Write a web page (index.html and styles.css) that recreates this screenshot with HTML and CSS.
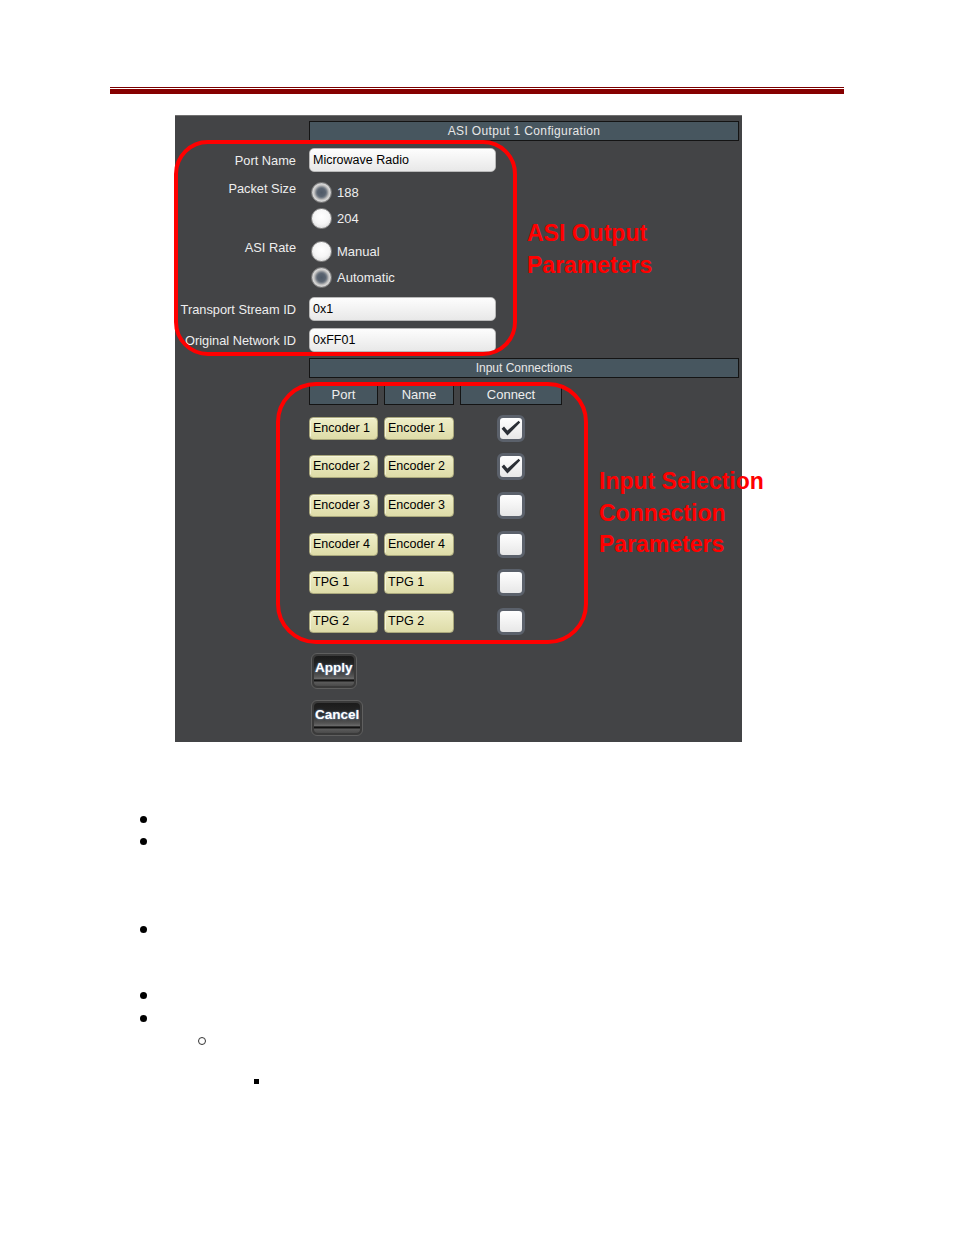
FILE: index.html
```html
<!DOCTYPE html>
<html>
<head>
<meta charset="utf-8">
<link rel="stylesheet" href="styles.css">
</head>
<body>
<div class="page">
  <div class="rule">
    <div class="rule-thin"></div>
    <div class="rule-thick"></div>
  </div>

  <div class="panel">
    <div class="sec-head sec-wide">ASI Output 1 Configuration</div>

    <div class="form">
      <div class="row center">
        <div class="lbl">Port Name</div>
        <div class="textbox">Microwave Radio</div>
      </div>
      <div class="row top">
        <div class="lbl">Packet Size</div>
        <div class="radios">
          <div class="radio-item"><span class="radio on"></span>188</div>
          <div class="radio-item"><span class="radio off"></span>204</div>
        </div>
      </div>
      <div class="row top">
        <div class="lbl">ASI Rate</div>
        <div class="radios">
          <div class="radio-item"><span class="radio off"></span>Manual</div>
          <div class="radio-item"><span class="radio on"></span>Automatic</div>
        </div>
      </div>
      <div class="row center">
        <div class="lbl">Transport Stream ID</div>
        <div class="textbox">0x1</div>
      </div>
      <div class="row center">
        <div class="lbl">Original Network ID</div>
        <div class="textbox">0xFF01</div>
      </div>
    </div>

    <div class="sec-head sec-conn">Input Connections</div>

    <div class="conn">
      <div class="conn-head">
        <div class="ch">Port</div>
        <div class="ch">Name</div>
        <div class="ch">Connect</div>
      </div>
      <div class="conn-rows">
        <div class="conn-row">
          <div class="chip">Encoder 1</div><div class="chip">Encoder 1</div>
          <div class="cb-cell"><span class="cb"><svg class="tick" viewBox="0 0 22 21"><path d="M1.6 10.8 L4 8.6 L7.4 12.4 L18.6 2.8 L20.2 4.6 L7.4 17.6 Z"/></svg></span></div>
        </div>
        <div class="conn-row">
          <div class="chip">Encoder 2</div><div class="chip">Encoder 2</div>
          <div class="cb-cell"><span class="cb"><svg class="tick" viewBox="0 0 22 21"><path d="M1.6 10.8 L4 8.6 L7.4 12.4 L18.6 2.8 L20.2 4.6 L7.4 17.6 Z"/></svg></span></div>
        </div>
        <div class="conn-row">
          <div class="chip">Encoder 3</div><div class="chip">Encoder 3</div>
          <div class="cb-cell"><span class="cb"></span></div>
        </div>
        <div class="conn-row">
          <div class="chip">Encoder 4</div><div class="chip">Encoder 4</div>
          <div class="cb-cell"><span class="cb"></span></div>
        </div>
        <div class="conn-row">
          <div class="chip">TPG 1</div><div class="chip">TPG 1</div>
          <div class="cb-cell"><span class="cb"></span></div>
        </div>
        <div class="conn-row">
          <div class="chip">TPG 2</div><div class="chip">TPG 2</div>
          <div class="cb-cell"><span class="cb"></span></div>
        </div>
      </div>
    </div>

    <div class="actions">
      <div class="btn"><div class="btn-face">Apply</div></div>
      <div class="btn btn-second"><div class="btn-face">Cancel</div></div>
    </div>

    <div class="note-box note-asi"></div>
    <div class="note-box note-inp"></div>
    <div class="note-text note-text-asi">ASI Output<br>Parameters</div>
    <div class="note-text note-text-inp">Input Selection<br>Connection<br>Parameters</div>
  </div>

  <div class="bullets">
    <div class="bullet disc first"></div>
    <div class="bullet disc g-s"></div>
    <div class="bullet disc g-l"></div>
    <div class="bullet disc g-m"></div>
    <div class="bullet disc g-s2"></div>
    <div class="bullet circle g-c"></div>
    <div class="bullet square g-q"></div>
  </div>
</div>
</body>
</html>
```
FILE: styles.css
```css
body {
  margin: 0;
  background: #ffffff;
  font-family: "Liberation Sans", Arial, sans-serif;
}

.page {
  padding-top: 87px;
}

.rule {
  margin-left: 110px;
  width: 734px;
}
.rule-thin {
  height: 1px;
  background: #7b0000;
}
.rule-thick {
  height: 5px;
  margin-top: 1px;
  background: #860000;
}

.panel {
  position: relative;
  margin-top: 21px;
  margin-left: 175px;
  width: 567px;
  height: 627px;
  box-sizing: border-box;
  border-top: 1px solid #707070;
  padding-top: 5px;
  background: #434446;
}

.sec-head {
  margin-left: 134px;
  width: 430px;
  height: 20px;
  box-sizing: border-box;
  border: 1px solid #141414;
  background: #47565f;
  color: #e8e8e8;
  font-size: 12px;
  line-height: 18px;
  text-align: center;
}
.sec-wide {
  letter-spacing: 0.35px;
}
.sec-conn {
  margin-top: 6px;
}

.form {
  margin-top: 7px;
  display: flex;
  flex-direction: column;
  gap: 7px;
}
.row {
  display: grid;
  grid-template-columns: 121px 187px;
  column-gap: 13px;
}
.row.center {
  align-items: center;
}
.lbl {
  text-align: right;
  color: #eeeeee;
  font-size: 12.8px;
  line-height: 15px;
  white-space: nowrap;
}
.row.top .lbl {
  padding-top: 2px;
}
.textbox {
  height: 24px;
  box-sizing: border-box;
  border: 1px solid #b9b9b9;
  border-radius: 5px;
  background: linear-gradient(#fdfdfd, #e8e8e8);
  color: #000;
  font-size: 12.5px;
  line-height: 22px;
  padding-left: 3px;
}

.radio-item {
  height: 26px;
  display: flex;
  align-items: center;
  gap: 5px;
  padding-left: 2px;
  color: #eeeeee;
  font-size: 13px;
}
.radio {
  width: 21px;
  height: 21px;
  border-radius: 50%;
  box-sizing: border-box;
  flex: none;
}
.radio.off {
  border: 1px solid #8c8c8c;
  background: radial-gradient(circle at 50% 40%, #ffffff 0%, #f6f6f6 50%, #d2d2d2 100%);
}
.radio.on {
  border: 1px solid #7e7e7e;
  background: radial-gradient(circle, #4f5a68 0, #5a6471 4px, #7c838c 5.5px, #b9b9b9 7px, #d8d8d8 8.5px, #a8a8a8 10px);
}

.conn {
  margin-left: 134px;
}
.conn-head,
.conn-row {
  display: grid;
  grid-template-columns: 69px 70px 102px;
  column-gap: 6px;
}
.conn-head {
  margin-top: 7px;
}
.ch {
  height: 20px;
  box-sizing: border-box;
  border: 1px solid #141414;
  background: #47565f;
  color: #eeeeee;
  font-size: 13px;
  line-height: 18px;
  text-align: center;
}
.conn-rows {
  margin-top: 4px;
}
.conn-row {
  height: 38.6px;
  align-items: center;
}
.chip {
  height: 23px;
  box-sizing: border-box;
  border: 1px solid #aaa87c;
  border-radius: 4px;
  background: linear-gradient(#efeec8, #dedca8);
  box-shadow: inset 1px 1px 0 #f6f5da;
  color: #000;
  font-size: 12.5px;
  line-height: 21px;
  padding-left: 3px;
  white-space: nowrap;
}
.cb-cell {
  display: flex;
  justify-content: center;
}
.cb {
  display: block;
  width: 28px;
  height: 27px;
  box-sizing: border-box;
  border: 3px solid #5b616b;
  border-radius: 6px;
  background: linear-gradient(#ffffff, #e7e7e7);
}
.tick {
  display: block;
  width: 22px;
  height: 21px;
}
.tick path {
  fill: #2b2f36;
}

.actions {
  margin-left: 136px;
  margin-top: 12px;
}
.btn {
  width: fit-content;
  height: 36px;
  box-sizing: border-box;
  border: 1px solid #5f5f5f;
  border-radius: 6px;
  padding: 2px;
  background: #3a3a3a;
}
.btn-second {
  margin-top: 11px;
}
.btn-face {
  height: 100%;
  box-sizing: border-box;
  border-radius: 4px;
  padding: 0 1px;
  background: linear-gradient(#1b1b1b 0%, #262626 35%, #555555 68%, #6c6c6c 77%, #121212 79%, #121212 84%, #5c5c5c 86%, #4a4a4a 100%);
  color: #ffffff;
  font-size: 13.5px;
  font-weight: bold;
  line-height: 24px;
  text-shadow: 0 0 2px #7fa6d6;
}

.note-box {
  position: absolute;
  box-sizing: border-box;
  border: 4px solid #ff0000;
}
.note-asi {
  left: -1px;
  top: 24px;
  width: 343px;
  height: 216px;
  border-radius: 34px;
}
.note-inp {
  left: 101px;
  top: 266px;
  width: 312px;
  height: 262px;
  border-radius: 40px;
}
.note-text {
  position: absolute;
  color: #ff0000;
  font-weight: bold;
  font-size: 23px;
  white-space: nowrap;
}
.note-text-asi {
  left: 352px;
  top: 101px;
  line-height: 32px;
}
.note-text-inp {
  left: 424px;
  top: 350px;
  line-height: 31.5px;
}

.bullets {
  padding-left: 140px;
}
.bullet {
  display: block;
  box-sizing: border-box;
}
.disc {
  width: 7px;
  height: 7px;
  border-radius: 50%;
  background: #000;
}
.circle {
  width: 8px;
  height: 8px;
  border-radius: 50%;
  border: 1px solid #333;
  margin-left: 58px;
}
.square {
  width: 5px;
  height: 5px;
  background: #000;
  margin-left: 114px;
}
.first { margin-top: 74px; }
.g-s { margin-top: 15px; }
.g-s2 { margin-top: 16px; }
.g-l { margin-top: 81px; }
.g-m { margin-top: 59px; }
.g-c { margin-top: 15px; }
.g-q { margin-top: 34px; }
```
